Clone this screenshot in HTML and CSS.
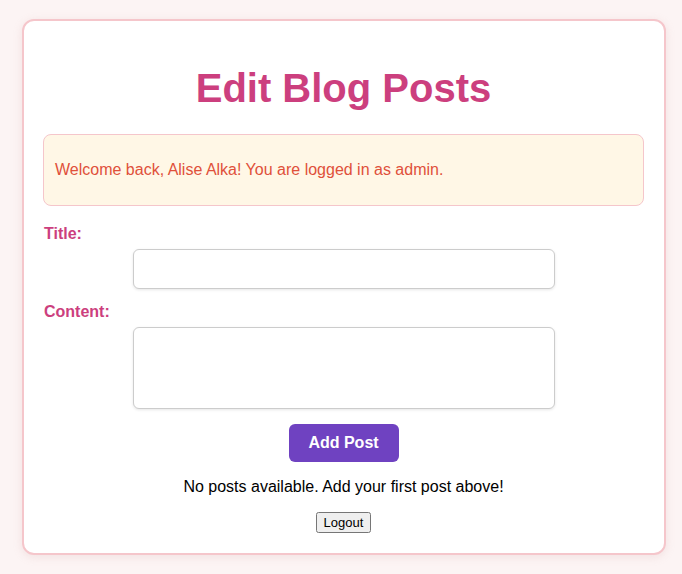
FILE: index.html
```html
<!DOCTYPE html>
<html lang="en">
<head>
<meta charset="utf-8">
<title>Edit Blog Posts</title>
<link rel="stylesheet" href="styles.css">
</head>
<body>
<div class="card">
  <h1 class="title">Edit Blog Posts</h1>
  <div class="alert"><p>Welcome back, Alise Alka! You are logged in as admin.</p></div>
  <form class="form">
    <label class="label" for="title">Title:</label>
    <input class="field" id="title" type="text">
    <label class="label" for="content">Content:</label>
    <textarea class="field area" id="content"></textarea>
    <button class="add" type="button">Add Post</button>
  </form>
  <p class="empty">No posts available. Add your first post above!</p>
  <div class="logout-row"><button class="logout" type="button">Logout</button></div>
</div>
</body>
</html>
```

FILE: styles.css
```css
html, body {
  margin: 0;
  padding: 0;
}
body {
  background: #fcf4f4;
  font-family: "Liberation Sans", Arial, sans-serif;
  font-size: 16px;
  padding: 19px 16px 20px 22px;
}
.card {
  width: 601px;
  background: #fff;
  border: 2px solid #f5c6cb;
  border-radius: 12px;
  padding: 20px 20px 20px 19px;
  box-shadow: 0 2px 10px rgba(200, 150, 150, 0.2);
}
.title {
  text-align: center;
  color: #cc3f7e;
  font-size: 40px;
  margin: 25px 0 23px;
}
.alert {
  background: #fff7e6;
  border: 1px solid #f5c6cb;
  border-radius: 8px;
  padding: 10px 11px;
  color: #e0503a;
  margin-bottom: 19px;
}
.alert p {
  margin: 16px 0;
}
.form {
  display: flex;
  flex-direction: column;
}
.label {
  color: #cc3f7e;
  font-weight: bold;
  margin-bottom: 6px;
  margin-left: 1px;
}
.field {
  width: 422px;
  align-self: center;
  box-sizing: border-box;
  height: 40px;
  border: 1px solid #ccc;
  border-radius: 6px;
  box-shadow: 0 1px 3px rgba(0, 0, 0, 0.1);
  margin-bottom: 14px;
  font-family: inherit;
  font-size: 16px;
  padding: 8px;
}
.area {
  height: 82px;
  resize: none;
}
.add {
  align-self: center;
  width: 110px;
  height: 38px;
  background: #6f42c1;
  color: #fff;
  border: none;
  border-radius: 6px;
  font-family: inherit;
  font-weight: bold;
  font-size: 16px;
  margin-top: 1px;
}
.empty {
  text-align: center;
  margin: 16px 0;
}
.logout-row {
  text-align: center;
}
.logout {
  font-family: "Liberation Sans", Arial, sans-serif;
  font-size: 13px;
}
```
